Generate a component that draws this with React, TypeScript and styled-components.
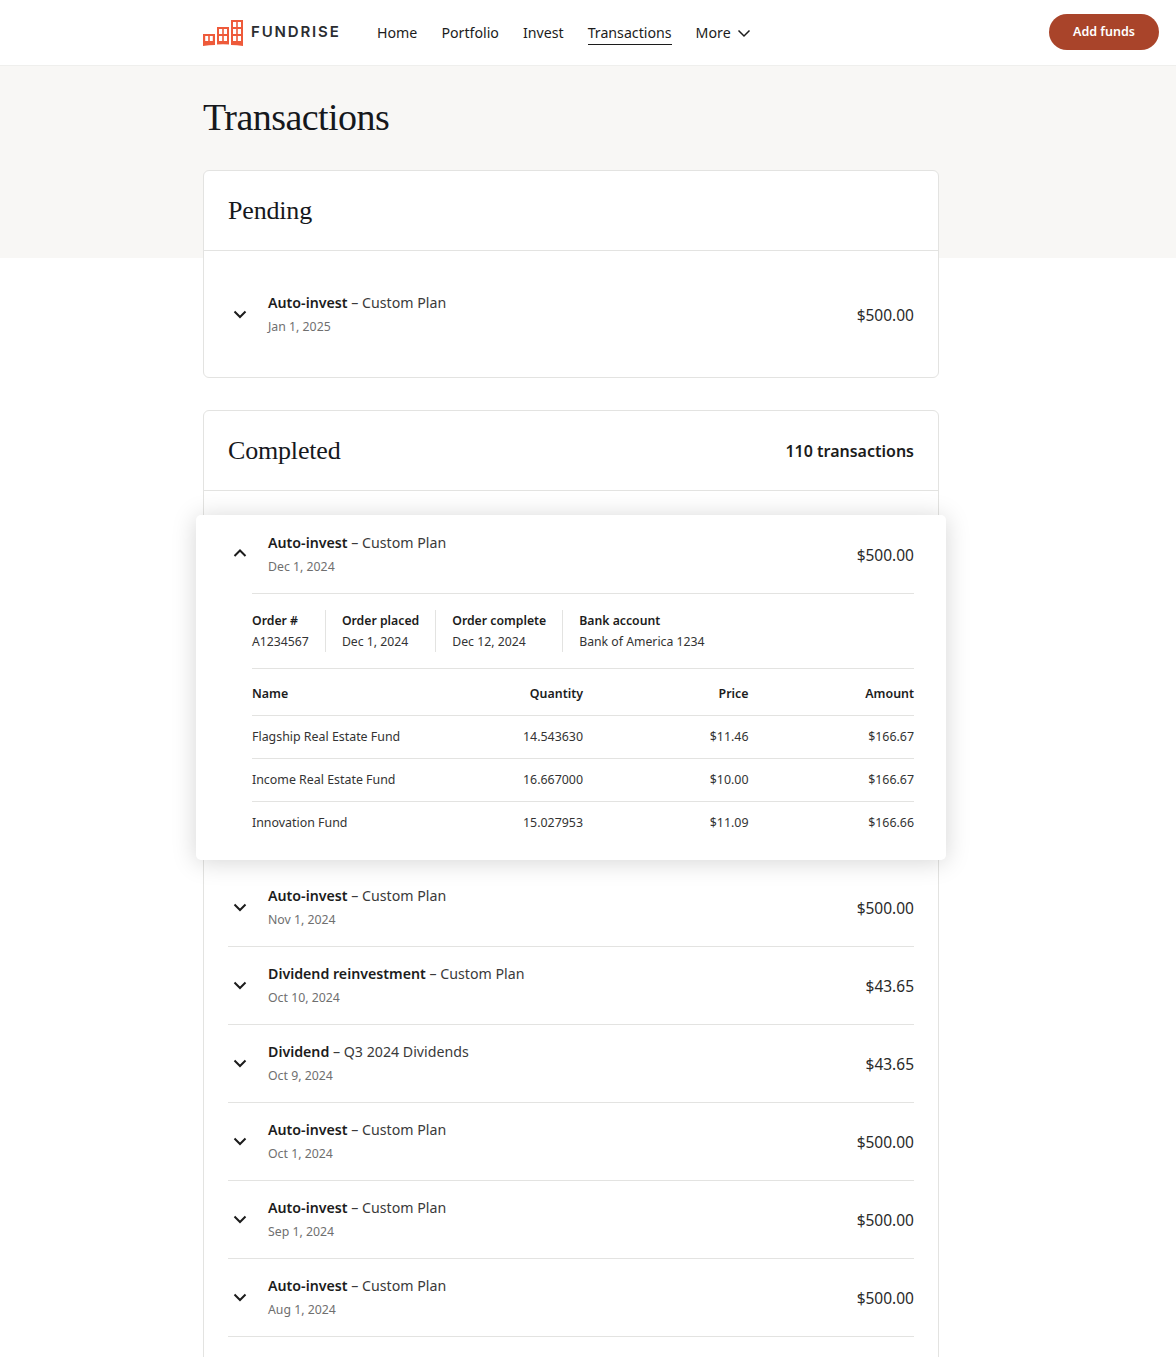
import React from 'react'
import styled, { createGlobalStyle } from 'styled-components'

const GlobalStyle = createGlobalStyle`
    html, body {
        margin: 0;
        padding: 0;
        background: #fff;
    }
    body {
        font-family: "Noto Sans", "Liberation Sans", sans-serif;
        color: #1c1c1c;
    }
`

const Page = styled.div`
    height: 1357px;
    overflow: hidden;
`

const Header = styled.header`
    height: 65px;
    border-bottom: 1px solid #efefed;
    display: flex;
    align-items: center;
    padding: 0 17px 0 203px;
`

const LogoLink = styled.div`
    display: flex;
    align-items: center;
    gap: 8px;
    width: 174px;
`

const LogoText = styled.span`
    font-family: "Inter", sans-serif;
    font-size: 15px;
    font-weight: 600;
    letter-spacing: 1.85px;
    color: #2b2d31;
    position: relative;
    top: -1px;
`

const Nav = styled.nav`
    flex: 1;
    display: flex;
    align-items: center;
    gap: 24px;
`

const NavItem = styled.a<{ $active?: boolean }>`
    font-size: 14.2px;
    line-height: 22px;
    color: #1c1c1c;
    padding-top: 1px;
    display: flex;
    align-items: center;
    gap: 5px;
    border-bottom: 1px solid ${p => (p.$active ? '#1c1c1c' : 'transparent')};
`

const AddFunds = styled.button`
    width: 110px;
    height: 36px;
    margin-bottom: 2px;
    border: none;
    border-radius: 18px;
    background: #a9442a;
    color: #fff;
    font-family: inherit;
    font-size: 12.5px;
    font-weight: 600;
`

const Main = styled.main`
    background: linear-gradient(#f8f7f5 192px, #fff 192px);
    padding: 0 237px 0 203px;
`

const Title = styled.h1`
    margin: 0;
    height: 102px;
    padding-bottom: 2px;
    line-height: 102px;
    font-family: "Liberation Serif", serif;
    font-size: 38px;
    font-weight: 400;
    letter-spacing: -0.55px;
    color: #16181c;
`

const Card = styled.section`
    background: #fff;
    border: 1px solid #e3e3e1;
    border-radius: 6px;
    margin-bottom: 32px;
`

const CardHead = styled.div`
    height: 79px;
    border-bottom: 1px solid #e3e3e1;
    padding: 0 24px;
    display: flex;
    align-items: center;
    justify-content: space-between;
`

const CardTitle = styled.h2`
    margin: 0;
    font-family: "Liberation Serif", serif;
    font-size: 26px;
    font-weight: 400;
    letter-spacing: -0.18px;
    color: #16181c;
`

const Count = styled.span`
    font-size: 16px;
    font-weight: 600;
    color: #1c1c1c;
`

const PendingBody = styled.div`
    padding: 25px 24px 23px;
`

const Row = styled.div<{ $last?: boolean }>`
    height: 77px;
    display: flex;
    align-items: center;
    border-bottom: 1px solid ${p => (p.$last ? 'transparent' : '#e3e3e1')};
`

const RowList = styled.div`
    padding: 0 24px 60px;
`

const Toggle = styled.span`
    width: 36px;
    padding-left: 4px;
    margin-bottom: 2px;
    flex: none;
    display: flex;
    align-items: center;
    color: #1c1c1c;
`

const RowText = styled.div`
    flex: 1;
    position: relative;
    top: -1px;
`

const RowTitle = styled.div`
    font-size: 14.2px;
    line-height: 22px;
    color: #3a3a3a;
    position: relative;
    top: 1px;
`

const Strong = styled.span`
    font-weight: 600;
    color: #1c1c1c;
`

const RowDate = styled.div`
    font-size: 12.3px;
    line-height: 18px;
    margin-top: 5px;
    color: #6f6f6f;
`

const Amount = styled.span`
    font-size: 15.5px;
    color: #2a2a2a;
`

const Expanded = styled.div`
    background: #fff;
    margin: 24px -8px 9px;
    padding: 0 32px 16px;
    border-radius: 5px;
    box-shadow: 0 2px 24px rgba(0, 0, 0, 0.17);
    position: relative;
`

const ExpandedHead = styled.div`
    height: 78px;
    display: flex;
    align-items: center;

    ${Amount} {
        margin-top: 2px;
    }
`

const Details = styled.div`
    margin-left: 24px;
`

const MetaRow = styled.div`
    display: flex;
    padding: 16px 0;
    border-top: 1px solid #e3e3e1;
    border-bottom: 1px solid #e3e3e1;
`

const Meta = styled.div<{ $first?: boolean }>`
    padding: 0 16px 0 ${p => (p.$first ? '0' : '16px')};
    border-right: 1px solid #e3e3e1;
    &:last-child {
        border-right: none;
    }
`

const MetaLabel = styled.div`
    font-size: 12.25px;
    line-height: 21px;
    font-weight: 600;
    color: #1c1c1c;
`

const MetaValue = styled.div`
    font-size: 12.25px;
    line-height: 21px;
    color: #333;
`

const FundTable = styled.table`
    width: 100%;
    border-collapse: collapse;
    table-layout: fixed;
    font-size: 12.4px;
`

const Th = styled.th<{ $left?: boolean }>`
    height: 44px;
    padding: 2px 0 0;
    font-weight: 600;
    color: #1c1c1c;
    text-align: ${p => (p.$left ? 'left' : 'right')};
    border-bottom: 1px solid #e3e3e1;
`

const Td = styled.td<{ $left?: boolean }>`
    height: 40px;
    padding: 0 0 2px;
    color: #333;
    text-align: ${p => (p.$left ? 'left' : 'right')};
    border-bottom: 1px solid #e3e3e1;
    tr:last-child & {
        border-bottom: none;
    }
`

const Chevron = ({ up, thin }: { up?: boolean; thin?: boolean }) => (
    <svg width="16" height="16" viewBox="0 0 16 16" fill="none">
        <path
            d={up ? 'M2.5 11 L8 5.5 L13.5 11' : 'M2.5 5.5 L8 11 L13.5 5.5'}
            stroke="currentColor"
            strokeWidth={thin ? 1.5 : 2}
        />
    </svg>
)

const Logo = () => (
    <svg width="40" height="26" viewBox="0 0 40 26">
        <path
            fill="#ee5a3a"
            fillRule="evenodd"
            d="M0 14 H12 V25 Q6 25.2 0 26 Z M2.2 16 V21 H5.2 V16 Z M6.8 16 V21 H9.8 V16 Z
               M14 7 H26 V24.5 Q20 24.2 14 24.5 Z M16 9 V14 H19.2 V9 Z M20.8 9 V14 H24 V9 Z M16 16 V21 H19.2 V16 Z M20.8 16 V21 H24 V16 Z
               M28 0 H40 V26 Q34 25.2 28 25 Z M30 2 V7 H33.2 V2 Z M34.8 2 V7 H38 V2 Z M30 9 V14 H33.2 V9 Z M34.8 9 V14 H38 V9 Z M30 16 V21 H33.2 V16 Z M34.8 16 V21 H38 V16 Z"
        />
    </svg>
)

const funds = [
    { name: 'Flagship Real Estate Fund', quantity: '14.543630', price: '$11.46', amount: '$166.67' },
    { name: 'Income Real Estate Fund', quantity: '16.667000', price: '$10.00', amount: '$166.67' },
    { name: 'Innovation Fund', quantity: '15.027953', price: '$11.09', amount: '$166.66' },
]

const meta = [
    { label: 'Order #', value: 'A1234567' },
    { label: 'Order placed', value: 'Dec 1, 2024' },
    { label: 'Order complete', value: 'Dec 12, 2024' },
    { label: 'Bank account', value: 'Bank of America 1234' },
]

const rows = [
    { kind: 'Auto-invest', plan: 'Custom Plan', date: 'Nov 1, 2024', amount: '$500.00' },
    { kind: 'Dividend reinvestment', plan: 'Custom Plan', date: 'Oct 10, 2024', amount: '$43.65' },
    { kind: 'Dividend', plan: 'Q3 2024 Dividends', date: 'Oct 9, 2024', amount: '$43.65' },
    { kind: 'Auto-invest', plan: 'Custom Plan', date: 'Oct 1, 2024', amount: '$500.00' },
    { kind: 'Auto-invest', plan: 'Custom Plan', date: 'Sep 1, 2024', amount: '$500.00' },
    { kind: 'Auto-invest', plan: 'Custom Plan', date: 'Aug 1, 2024', amount: '$500.00' },
]

const TxText = ({ kind, plan, date }: { kind: string; plan: string; date: string }) => (
    <RowText>
        <RowTitle>
            <Strong>{kind}</Strong> – {plan}
        </RowTitle>
        <RowDate>{date}</RowDate>
    </RowText>
)

const App = () => {
    return (
        <Page>
            <GlobalStyle />
            <Header>
                <LogoLink>
                    <Logo />
                    <LogoText>FUNDRISE</LogoText>
                </LogoLink>
                <Nav>
                    <NavItem>Home</NavItem>
                    <NavItem>Portfolio</NavItem>
                    <NavItem>Invest</NavItem>
                    <NavItem $active>Transactions</NavItem>
                    <NavItem>
                        More <Chevron thin />
                    </NavItem>
                </Nav>
                <AddFunds>Add funds</AddFunds>
            </Header>
            <Main>
                <Title>Transactions</Title>
                <Card>
                    <CardHead>
                        <CardTitle>Pending</CardTitle>
                    </CardHead>
                    <PendingBody>
                        <Row $last>
                            <Toggle><Chevron /></Toggle>
                            <TxText kind="Auto-invest" plan="Custom Plan" date="Jan 1, 2025" />
                            <Amount>$500.00</Amount>
                        </Row>
                    </PendingBody>
                </Card>
                <Card>
                    <CardHead>
                        <CardTitle>Completed</CardTitle>
                        <Count>110 transactions</Count>
                    </CardHead>
                    <Expanded>
                        <ExpandedHead>
                            <Toggle><Chevron up /></Toggle>
                            <TxText kind="Auto-invest" plan="Custom Plan" date="Dec 1, 2024" />
                            <Amount>$500.00</Amount>
                        </ExpandedHead>
                        <Details>
                            <MetaRow>
                                {meta.map((m, i) => (
                                    <Meta key={m.label} $first={i === 0}>
                                        <MetaLabel>{m.label}</MetaLabel>
                                        <MetaValue>{m.value}</MetaValue>
                                    </Meta>
                                ))}
                            </MetaRow>
                            <FundTable>
                                <thead>
                                    <tr>
                                        <Th $left>Name</Th>
                                        <Th>Quantity</Th>
                                        <Th>Price</Th>
                                        <Th>Amount</Th>
                                    </tr>
                                </thead>
                                <tbody>
                                    {funds.map(f => (
                                        <tr key={f.name}>
                                            <Td $left>{f.name}</Td>
                                            <Td>{f.quantity}</Td>
                                            <Td>{f.price}</Td>
                                            <Td>{f.amount}</Td>
                                        </tr>
                                    ))}
                                </tbody>
                            </FundTable>
                        </Details>
                    </Expanded>
                    <RowList>
                        {rows.map(r => (
                            <Row key={r.kind + r.date}>
                                <Toggle><Chevron /></Toggle>
                                <TxText kind={r.kind} plan={r.plan} date={r.date} />
                                <Amount>{r.amount}</Amount>
                            </Row>
                        ))}
                    </RowList>
                </Card>
            </Main>
        </Page>
    )
}

export default App
